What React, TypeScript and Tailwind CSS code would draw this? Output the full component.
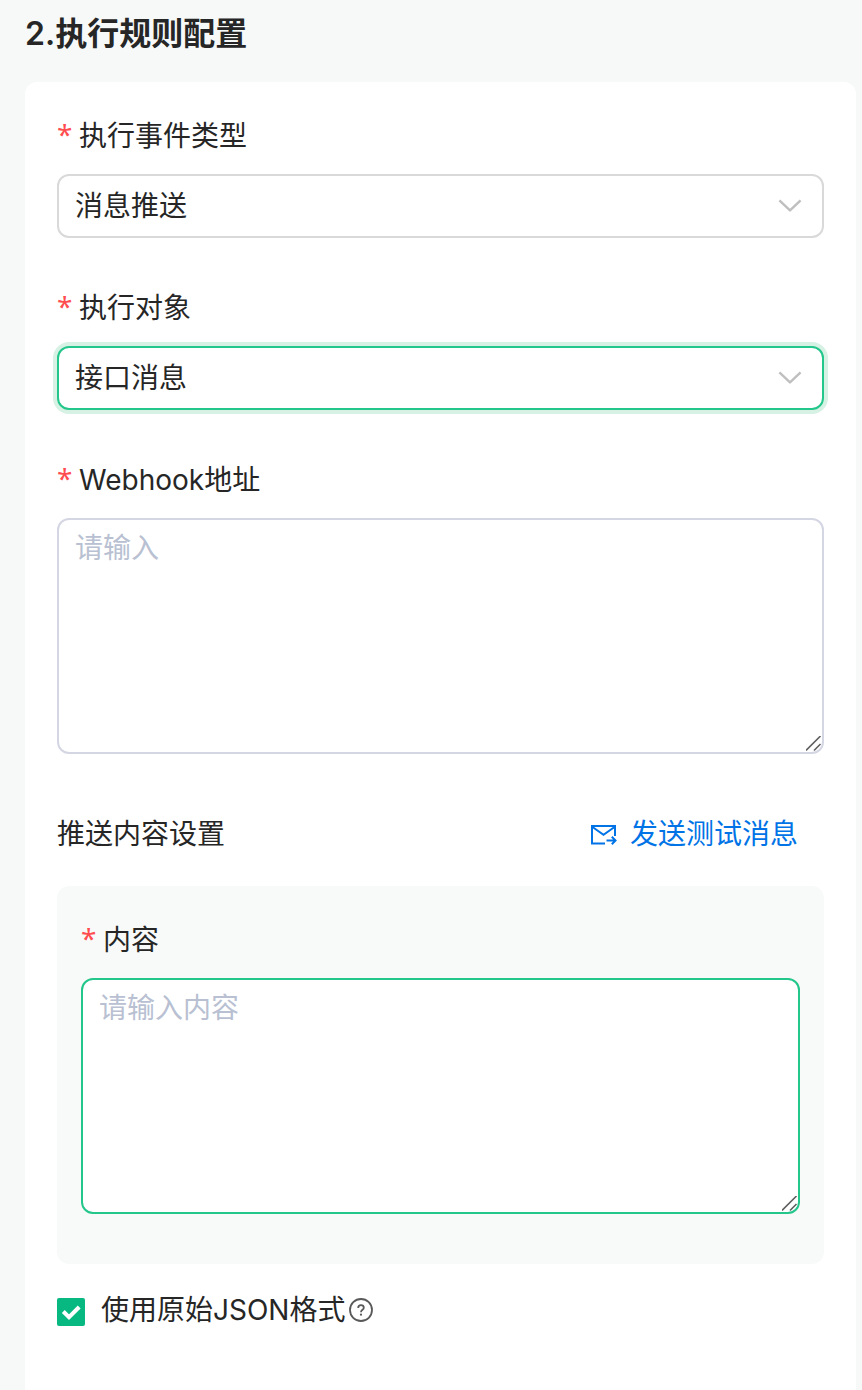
import { useState, type ReactNode } from "react";

function FieldLabel({ htmlFor, children }: { htmlFor: string; children: ReactNode }) {
  return (
    <label htmlFor={htmlFor} className="mb-4 flex items-start gap-2 leading-[44px]">
      <span
        aria-hidden="true"
        className="w-[14px] text-center font-['Noto_Sans'] leading-10 text-[#ff4d4f]"
      >
        *
      </span>
      <span>{children}</span>
    </label>
  );
}

function SelectField({
  id,
  label,
  options,
  active = false,
}: {
  id: string;
  label: string;
  options: string[];
  active?: boolean;
}) {
  return (
    <div>
      <FieldLabel htmlFor={id}>{label}</FieldLabel>
      <div className="relative">
        <select
          id={id}
          className={`block h-16 w-full appearance-none rounded-xl border-2 bg-white pr-14 pl-4 outline-none ${
            active ? "border-[#23c68b] ring-4 ring-[#d7f1e5]" : "border-[#d9d9d9]"
          }`}
        >
          {options.map((option) => (
            <option key={option}>{option}</option>
          ))}
        </select>
        <svg
          viewBox="0 0 24 14"
          fill="none"
          stroke="#bfbfbf"
          strokeWidth="2.4"
          className="pointer-events-none absolute top-[25px] right-[22px] h-[14px] w-6"
        >
          <path d="M1.4 1.4 12 11.4 22.6 1.4" strokeLinejoin="round" />
        </svg>
      </div>
    </div>
  );
}

function TextAreaField({
  id,
  label,
  placeholder,
  active = false,
}: {
  id: string;
  label: string;
  placeholder: string;
  active?: boolean;
}) {
  return (
    <div>
      <FieldLabel htmlFor={id}>{label}</FieldLabel>
      <div className="relative">
        <textarea
          id={id}
          placeholder={placeholder}
          className={`block h-[236px] w-full resize-none rounded-xl border-2 bg-white px-4 py-1.5 leading-[44px] outline-none placeholder:text-[#b8c0d2] ${
            active ? "border-[#23c68b]" : "border-[#d4d7e3]"
          }`}
        />
        <svg
          viewBox="0 0 16 16"
          fill="none"
          stroke="#606060"
          strokeWidth="1.6"
          className="pointer-events-none absolute right-[2px] bottom-[2px] h-4 w-4"
        >
          <path d="M0 14.500 14.500 0M8 14.500 14.500 8" />
        </svg>
      </div>
    </div>
  );
}

export default function App() {
  const [rawJson, setRawJson] = useState(true);

  return (
    <main className="flex min-h-screen flex-col bg-[#f7f9f8] pr-1.5 pl-[25px] font-[Inter,'Noto_Sans_CJK_SC',sans-serif] text-[28px] text-[#262626]">
      <h1 className="pt-2.5 pb-6 text-[32px] leading-[48px] font-semibold">2.执行规则配置</h1>

      <form className="flex grow flex-col gap-12 rounded-t-xl bg-white p-8">
        <SelectField id="event-type" label="执行事件类型" options={["消息推送"]} />
        <SelectField id="target" label="执行对象" options={["接口消息"]} active />
        <TextAreaField id="webhook" label="Webhook地址" placeholder="请输入" />

        <section>
          <div className="mb-5 flex h-16 items-center justify-between pr-[26px]">
            <h2>推送内容设置</h2>
            <button type="button" className="flex items-center gap-3 text-[#0073e6]">
              <svg
                viewBox="0 0 28 24"
                fill="none"
                stroke="currentColor"
                strokeWidth="2"
                className="h-6 w-7"
              >
                <path d="M15 21.500H2V4H25V14" />
                <path d="M2.500 5 13.500 12.800 24.500 5" />
                <path d="M16.500 18.500H25M21.800 14.800 25.500 18.500 21.800 22.200" />
              </svg>
              发送测试消息
            </button>
          </div>

          <div className="rounded-xl bg-[#f8faf9] px-6 pt-8 pb-[50px]">
            <TextAreaField id="content" label="内容" placeholder="请输入内容" active />
          </div>

          <div className="mt-6 flex items-center">
            <label className="flex items-center gap-4 leading-[44px]">
              <span className="relative mt-1 h-7 w-7">
                <input
                  type="checkbox"
                  checked={rawJson}
                  onChange={(event) => setRawJson(event.target.checked)}
                  className="peer block h-7 w-7 appearance-none rounded-xs border-2 border-[#d4d7e3] checked:border-[#07b981] checked:bg-[#07b981]"
                />
                <svg
                  viewBox="0 0 28 28"
                  fill="none"
                  stroke="white"
                  strokeWidth="4"
                  className="pointer-events-none absolute inset-0 hidden peer-checked:block"
                >
                  <path d="M6.300 13.500 12 19.200 22.200 9" />
                </svg>
              </span>
              使用原始JSON格式
            </label>
            <button type="button" aria-label="帮助" className="ml-1 text-[#595959]">
              <svg viewBox="0 0 24 24" fill="none" stroke="currentColor" className="h-6 w-6">
                <circle cx="12" cy="12" r="11" strokeWidth="1.8" />
                <path
                  d="M9.200 10C9.200 8.200 10.400 7.200 12 7.200S14.800 8.200 14.800 9.700C14.800 11.900 12 11.700 12 14.200"
                  strokeWidth="1.8"
                />
                <circle cx="12" cy="16.700" r="1.1" fill="currentColor" stroke="none" />
              </svg>
            </button>
          </div>
        </section>
      </form>
    </main>
  );
}
